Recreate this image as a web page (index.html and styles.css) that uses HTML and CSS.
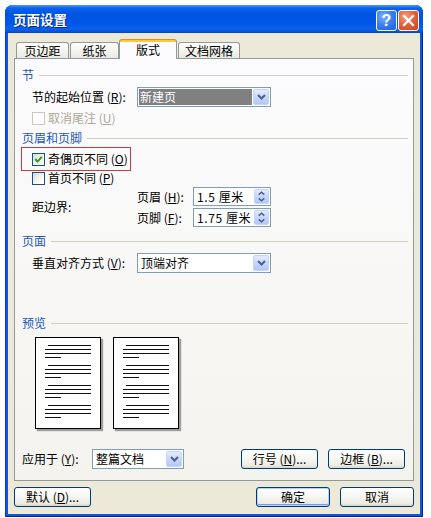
FILE: index.html
```html
<!DOCTYPE html>
<html lang="zh-CN">
<head>
<meta charset="utf-8">
<title>页面设置</title>
<link rel="stylesheet" href="styles.css">
</head>
<body>
<div class="window">
  <div class="titlebar">
    <span class="title">页面设置</span>
    <div class="tb-buttons">
      <span class="tb-btn help">?</span>
      <span class="tb-btn close"><svg width="13" height="13" viewBox="0 0 13 13"><path d="M2 2 L11 11 M11 2 L2 11" stroke="#fff" stroke-width="2.2" stroke-linecap="square"/></svg></span>
    </div>
  </div>
  <div class="client">
    <div class="tabs">
      <span class="tab t1">页边距</span>
      <span class="tab t2">纸张</span>
      <span class="tab active">版式</span>
      <span class="tab t4">文档网格</span>
    </div>
    <div class="panel">
      <div class="gh gh1"><span>节</span><i class="rule"></i></div>
      <div class="row indent r-start">
        <span class="label lw">节的起始位置 (<u>R</u>):</span>
        <div class="select sel-wide">
          <span class="sel-text hl">新建页</span>
          <span class="dd"><svg width="9" height="6" viewBox="0 0 9 6"><path d="M1 1 L4.5 4.5 L8 1" fill="none" stroke="#4d6185" stroke-width="2"/></svg></span>
        </div>
      </div>
      <div class="row indent r-end">
        <span class="cb cb-dis"></span><span class="cb-label dis">取消尾注 (<u>U</u>)</span>
      </div>
      <div class="gh gh2"><span>页眉和页脚</span><i class="rule"></i></div>
      <div class="redbox">
        <span class="cb"><svg width="11" height="11" viewBox="0 0 11 11"><path d="M2.2 5 L4.5 7.6 L8.8 2.8" fill="none" stroke="#21a121" stroke-width="2"/></svg></span><span class="cb-label">奇偶页不同 (<u>O</u>)</span>
      </div>
      <div class="row-sm indent">
        <span class="cb"></span><span class="cb-label">首页不同 (<u>P</u>)</span>
      </div>
      <div class="margins indent">
        <span class="label lw">距边界:</span>
        <div class="spins">
          <div class="spin-row">
            <span class="label sw">页眉 (<u>H</u>):</span>
            <div class="spin"><span class="spin-text">1.5 厘米</span><span class="spin-btn"><svg width="14" height="15" viewBox="0 0 14 15"><path d="M4 5.5 L7 2.8 L10 5.5 M4 9.5 L7 12.2 L10 9.5" fill="none" stroke="#4d6185" stroke-width="1.6"/></svg></span></div>
          </div>
          <div class="spin-row">
            <span class="label sw">页脚 (<u>F</u>):</span>
            <div class="spin"><span class="spin-text">1.75 厘米</span><span class="spin-btn"><svg width="14" height="15" viewBox="0 0 14 15"><path d="M4 5.5 L7 2.8 L10 5.5 M4 9.5 L7 12.2 L10 9.5" fill="none" stroke="#4d6185" stroke-width="1.6"/></svg></span></div>
          </div>
        </div>
      </div>
      <div class="gh gh3"><span>页面</span><i class="rule"></i></div>
      <div class="row indent r-valign">
        <span class="label lw">垂直对齐方式 (<u>V</u>):</span>
        <div class="select sel-wide">
          <span class="sel-text">顶端对齐</span>
          <span class="dd"><svg width="9" height="6" viewBox="0 0 9 6"><path d="M1 1 L4.5 4.5 L8 1" fill="none" stroke="#4d6185" stroke-width="2"/></svg></span>
        </div>
      </div>
      <div class="gh gh4"><span>预览</span><i class="rule"></i></div>
      <div class="preview">
        <div class="page">
          <div class="para"><i class="ln first"></i><i class="ln"></i><i class="ln"></i><i class="ln short"></i></div>
          <div class="para"><i class="ln first"></i><i class="ln"></i><i class="ln"></i><i class="ln short"></i></div>
          <div class="para"><i class="ln first"></i><i class="ln"></i><i class="ln"></i><i class="ln short"></i></div>
          <div class="para"><i class="ln first"></i><i class="ln"></i><i class="ln"></i><i class="ln short"></i></div>
        </div>
        <div class="page">
          <div class="para"><i class="ln first"></i><i class="ln"></i><i class="ln"></i><i class="ln short"></i></div>
          <div class="para"><i class="ln first"></i><i class="ln"></i><i class="ln"></i><i class="ln short"></i></div>
          <div class="para"><i class="ln first"></i><i class="ln"></i><i class="ln"></i><i class="ln short"></i></div>
          <div class="para"><i class="ln first"></i><i class="ln"></i><i class="ln"></i><i class="ln short"></i></div>
        </div>
      </div>
      <div class="row apply">
        <span class="label aw">应用于 (<u>Y</u>):</span>
        <div class="select sel-apply">
          <span class="sel-text">整篇文档</span>
          <span class="dd"><svg width="9" height="6" viewBox="0 0 9 6"><path d="M1 1 L4.5 4.5 L8 1" fill="none" stroke="#4d6185" stroke-width="2"/></svg></span>
        </div>
        <div class="apply-btns">
          <span class="btn bw77">行号 (<u>N</u>)...</span>
          <span class="btn bw77">边框 (<u>B</u>)...</span>
        </div>
      </div>
    </div>
    <div class="footer">
      <span class="btn bw77">默认 (<u>D</u>)...</span>
      <div class="footer-right">
        <span class="btn bw74 default">确定</span>
        <span class="btn bw74">取消</span>
      </div>
    </div>
  </div>
</div>
</body>
</html>
```

FILE: styles.css
```css
* { box-sizing: border-box; }

body {
  margin: 0;
  background: #fff;
  font-family: "Noto Sans CJK SC", "Noto Sans", sans-serif;
  font-size: 12px;
  line-height: 14px;
  color: #000;
}

u { text-decoration: underline; text-underline-offset: 1px; }

.window {
  margin: 5px 0 0 5px;
  width: 418px;
  height: 512px;
  background: #0a58de;
  border-radius: 8px 8px 0 0;
  display: flex;
  flex-direction: column;
  box-shadow: inset 1px 0 0 #0838c8, inset -1px 0 0 #00209c, inset 0 -1px 0 #00209c;
}

.titlebar {
  height: 28px;
  flex: none;
  display: flex;
  justify-content: space-between;
  padding: 0 4px 0 8px;
  border-radius: 8px 8px 0 0;
  background: linear-gradient(to bottom, #4a9bff 0px, #0c63ec 3px, #0054e3 9px, #0056e6 18px, #0a62ee 24px, #0451d6 27px, #0040b8 28px);
}

.title {
  color: #fff;
  font-weight: bold;
  font-size: 13.5px;
  line-height: 28px;
  text-shadow: 1px 1px 0 #0a2a8a;
}

.tb-buttons {
  display: flex;
  gap: 1px;
  margin-top: 5px;
}

.tb-btn {
  width: 21px;
  height: 21px;
  border: 1px solid #fff;
  border-radius: 3px;
  display: flex;
  align-items: center;
  justify-content: center;
}

.help {
  background: radial-gradient(circle at 35% 30%, #7eb3ff 0%, #3b80f4 45%, #1a5fe0 100%);
  color: #fff;
  font-family: "Liberation Sans", sans-serif;
  font-weight: bold;
  font-size: 16px;
  line-height: 19px;
}

.close {
  background: radial-gradient(circle at 35% 30%, #f4a386 0%, #e3653f 45%, #c6401b 100%);
}

.client {
  flex: 1;
  margin: 0 3px 3px;
  background: #ece9d8;
  padding: 6px 6px 0;
  display: flex;
  flex-direction: column;
}

/* Tabs */
.tabs {
  display: flex;
  align-items: flex-end;
  height: 19px;
  padding-left: 2px;
  position: relative;
  z-index: 1;
}

.tab {
  height: 16px;
  border: 1px solid #919b9c;
  border-bottom: 0;
  border-radius: 3px 3px 0 0;
  background: linear-gradient(to bottom, #ffffff, #f3f2ec 60%, #e9e8e1);
  display: flex;
  align-items: center;
  justify-content: center;
  padding-top: 1px;
}

.t1 { width: 53px; margin-right: 1px; }
.t2 { width: 49px; }
.t4 { width: 62px; margin-left: 1px; }

.tab.active {
  width: 58px;
  height: 20px;
  margin-bottom: -1px;
  border-top: 1px solid #e68b2c;
  background: linear-gradient(to bottom, #ffc73c 0px, #ffc73c 2px, #fcfcfe 2px);
  padding-top: 0;
}

.panel {
  height: 423px;
  border: 1px solid #919b9c;
  background: linear-gradient(to bottom, #fcfcfe, #f4f3ee);
  padding: 0 5px 0 0;
  display: flex;
  flex-direction: column;
}

/* Group headings */
.gh {
  display: flex;
  align-items: center;
  height: 18px;
  padding-left: 7px;
  color: #1c56c0;
}

.gh .rule {
  flex: 1;
  height: 1px;
  background: #d0d0bf;
  margin-left: 5px;
}

.gh1 { margin-top: 7px; }
.gh2 { margin-top: 1px; }
.gh3 { margin-top: 5px; }
.gh4 { margin-top: 41px; }

.row {
  display: flex;
  align-items: center;
  height: 20px;
}

.indent { padding-left: 17px; }

.r-start { margin-top: 3px; }
.r-end { margin-top: 1px; }
.r-valign { margin-top: 3px; }

.label { flex: none; }
.lw { width: 105px; }
.sw { width: 56px; }
.aw { width: 70px; }

.select {
  height: 20px;
  border: 1px solid #7f9db9;
  background: #fff;
  display: flex;
  padding: 1px;
}

.sel-wide { width: 134px; }
.sel-apply { width: 92px; }

.sel-text {
  flex: 1;
  margin-right: 1px;
  padding-left: 2px;
  display: flex;
  align-items: center;
}

.sel-text.hl {
  background: #808080;
  color: #fff;
  padding-left: 1px;
}

.dd {
  width: 16px;
  flex: none;
  border: 1px solid #c3d3fd;
  border-radius: 2px;
  background: linear-gradient(to bottom, #e3ebfe, #c5d6fc 55%, #b4c8f6);
  display: flex;
  align-items: center;
  justify-content: center;
}

/* Checkboxes */
.cb {
  width: 13px;
  height: 13px;
  flex: none;
  border: 1px solid #1c5180;
  background: linear-gradient(135deg, #dcdcd5, #ffffff 80%);
  display: flex;
  align-items: center;
  justify-content: center;
}

.cb-dis {
  border-color: #cac8bb;
  background: #fff;
}

.cb-label { margin-left: 3px; }
.cb-label.dis { color: #aca899; }

.redbox {
  margin-left: 6px;
  width: 110px;
  height: 24px;
  border: 1px solid #cc3a40;
  padding-left: 10px;
  display: flex;
  align-items: center;
}

.row-sm {
  display: flex;
  align-items: center;
  height: 14px;
}

/* Margins block */
.margins {
  display: flex;
  align-items: center;
  margin-top: 2px;
}

.spins {
  display: flex;
  flex-direction: column;
  gap: 2px;
}

.spin-row {
  display: flex;
  align-items: center;
  height: 19px;
}

.spin {
  width: 78px;
  height: 19px;
  border: 1px solid #7f9db9;
  background: #fff;
  display: flex;
  padding: 1px;
}

.spin-text {
  flex: 1;
  padding-left: 2px;
  display: flex;
  align-items: center;
  letter-spacing: 0.6px;
}

.spin-btn {
  width: 15px;
  flex: none;
  border: 1px solid #c3d3fd;
  border-radius: 2px;
  background: linear-gradient(to bottom, #e3ebfe, #c5d6fc 50%, #b4c8f6);
  display: flex;
  align-items: center;
  justify-content: center;
}

/* Preview */
.preview {
  display: flex;
  gap: 12px;
  padding-left: 20px;
  margin-top: 5px;
}

.page {
  width: 66px;
  height: 92px;
  border: 1px solid #000;
  background: #fff;
  box-shadow: 2px 2px 1px #9c9c9c;
  padding: 7px 0 0 9px;
  display: flex;
  flex-direction: column;
  gap: 7px;
}

.para {
  display: flex;
  flex-direction: column;
  gap: 3px;
}

.ln {
  display: block;
  width: 46px;
  height: 1px;
  background: #111;
}

.ln.first { width: 43px; margin-left: 3px; }
.ln.short { width: 16px; }

/* Apply row */
.apply {
  margin-top: 20px;
  padding-left: 7px;
}

.apply-btns {
  margin-left: auto;
  margin-right: 3px;
  display: flex;
  gap: 10px;
}

.btn {
  height: 20px;
  border: 1px solid #003c74;
  border-radius: 3px;
  background: linear-gradient(to bottom, #ffffff, #f6f6f2 50%, #ecebe4 85%, #d8d5c9);
  display: flex;
  align-items: center;
  justify-content: center;
}

.bw77 { width: 77px; }
.bw74 { width: 74px; }

.btn.default {
  box-shadow: inset 0 0 0 1px #b6d0f8, inset 0 -1px 0 1px #7b9de8;
}

.footer {
  margin-top: 6px;
  display: flex;
  justify-content: space-between;
}

.footer-right {
  display: flex;
  gap: 10px;
}
```
